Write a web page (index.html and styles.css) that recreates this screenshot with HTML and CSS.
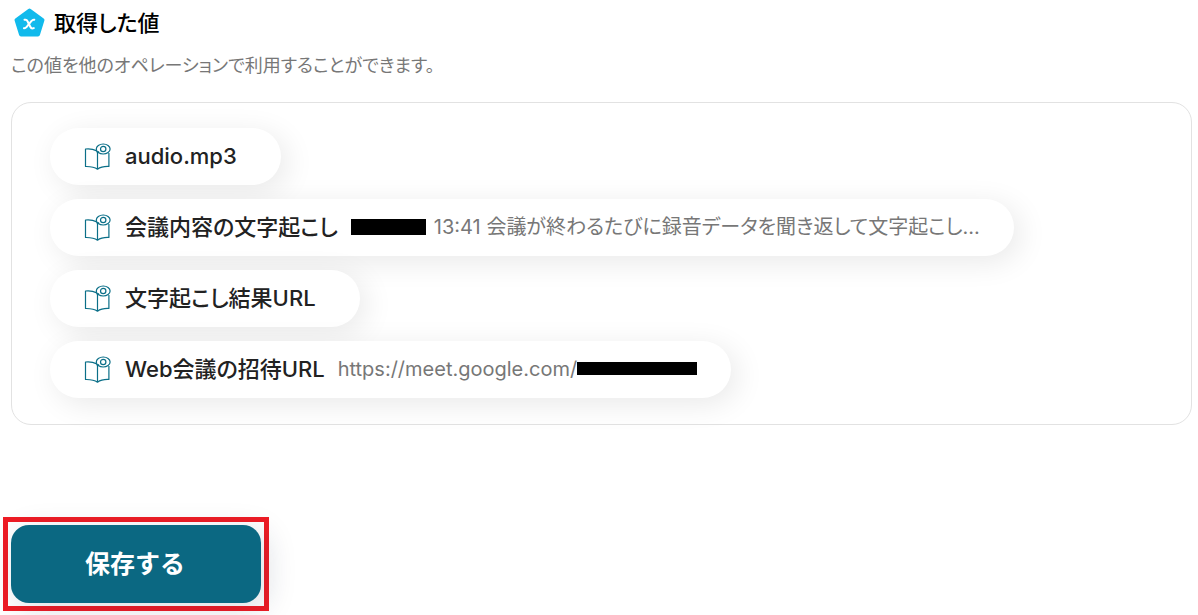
FILE: index.html
```html
<!DOCTYPE html>
<html lang="ja">
<head>
    <meta charset="UTF-8">
    <meta name="viewport" content="width=device-width, initial-scale=1.0">
    <title>取得した値</title>
    <link rel="stylesheet" href="styles.css">
</head>
<body>
    <!-- Icon used in every value row -->
    <svg class="icon-defs" width="0" height="0" aria-hidden="true">
        <symbol id="book" viewBox="0 0 27 28">
            <path d="M12.200 7.600C9 5.900 5 5.700 1.500 6V23.500C6 23.400 10.500 24 13.500 26.200C16.500 24 20.500 23.300 24.900 23.500V10M13.500 10.200C13.200 8.900 12.700 8 12.200 7.600M13.500 10.200C13.800 9.400 14.300 9 15 8.600M13.500 10.200V26.200"/>
            <ellipse cx="19.200" cy="6" rx="6.900" ry="5"/>
            <circle cx="19.200" cy="6" r="2.700"/>
        </symbol>
    </svg>

    <div class="title">
        <svg class="title-icon" width="32" height="32" viewBox="0 0 32 32" aria-hidden="true">
            <path class="pentagon" d="M16.500 3.500L29.500 13L25 27.500H8L3.500 13Z"/>
            <path class="mark" d="M11.500 12.800C13 12.400 13.900 12.800 14.400 14L17.400 20C18 21.300 19.200 21.800 20.800 21.100"/>
            <path class="mark" d="M21.300 12.700C20 12.500 19.300 12.900 18.500 14L13.500 20C12.800 21 12 21.300 10.900 21.200"/>
        </svg>
        <h2>取得した値</h2>
    </div>
    <p class="description">この値を他のオペレーションで利用することができます。</p>

    <!-- Values -->
    <div class="value-box">
        <div class="value">
            <svg class="book"><use href="#book"/></svg>
            <span class="name">audio.mp3</span>
        </div>
        <div class="value">
            <svg class="book"><use href="#book"/></svg>
            <span class="name">会議内容の文字起こし</span>
            <span class="sample"><span class="mask mask-date"></span>13:41 会議が終わるたびに録音データを聞き返して文字起こし...</span>
        </div>
        <div class="value">
            <svg class="book"><use href="#book"/></svg>
            <span class="name">文字起こし結果URL</span>
        </div>
        <div class="value">
            <svg class="book"><use href="#book"/></svg>
            <span class="name">Web会議の招待URL</span>
            <span class="sample">https://meet.google.com/<span class="mask mask-code"></span></span>
        </div>
    </div>

    <!-- Save -->
    <div class="save-frame">
        <button class="save-button" type="button">保存する</button>
    </div>
</body>
</html>
```
FILE: styles.css
```css
body { font-family: Inter, "Noto Sans CJK JP", sans-serif; font-feature-settings: "palt"; background-color: #fff; color: #222; margin: 0; padding: 7px 6px 4px 11px; }
.icon-defs { position: absolute; }

.title { display: flex; align-items: center; gap: 9px; margin-left: 2px; }
.title h2 { font-size: 22px; line-height: 32px; font-weight: 500; color: #000; margin: 0; }
.pentagon { fill: #11baec; stroke: #11baec; stroke-width: 4px; stroke-linejoin: round; }
.mark { fill: none; stroke: #fff; stroke-width: 2px; stroke-linecap: round; }
.description { font-size: 18px; line-height: 24px; color: #777; margin: 15px 0 24px; }

.value-box { display: flex; flex-direction: column; align-items: flex-start; gap: 14px; padding: 25px 38px 26px; border: 1px solid #e2e2e2; border-radius: 20px; }
.value { display: flex; align-items: center; box-sizing: border-box; min-height: 57px; padding: 0 34px; border-radius: 29px; background-color: #fff; box-shadow: 6px 6px 30px rgba(0,0,0,0.09); }
.book { width: 27px; height: 28px; margin-right: 14px; fill: none; stroke: #0b6f88; stroke-width: 1.2px; stroke-linejoin: round; }
.name { padding-bottom: 2px; font-size: 22px; line-height: 32px; font-weight: 500; }
.name:last-child { margin-right: 10px; }
.sample { display: flex; align-items: center; margin-left: 13px; padding-bottom: 2px; font-size: 20px; line-height: 32px; color: #777; }
.mask { background-color: #000; }
.mask-date { width: 75px; height: 16px; margin-right: 8px; }
.mask-code { width: 120px; height: 13px; }

.save-frame { width: fit-content; margin: 92px 0 0 -8px; padding: 3px; border: 5px solid #ee1c25; }
.save-button { display: block; width: 250px; height: 78px; padding: 0 2px 4px 0; border: none; border-radius: 18px; background-color: #0b6882; color: #fff; font-family: inherit; font-size: 25px; font-weight: 700; cursor: pointer; box-shadow: 6px 6px 30px rgba(20,40,70,0.15); }
.save-button:hover { background-color: #095a70; }
```
